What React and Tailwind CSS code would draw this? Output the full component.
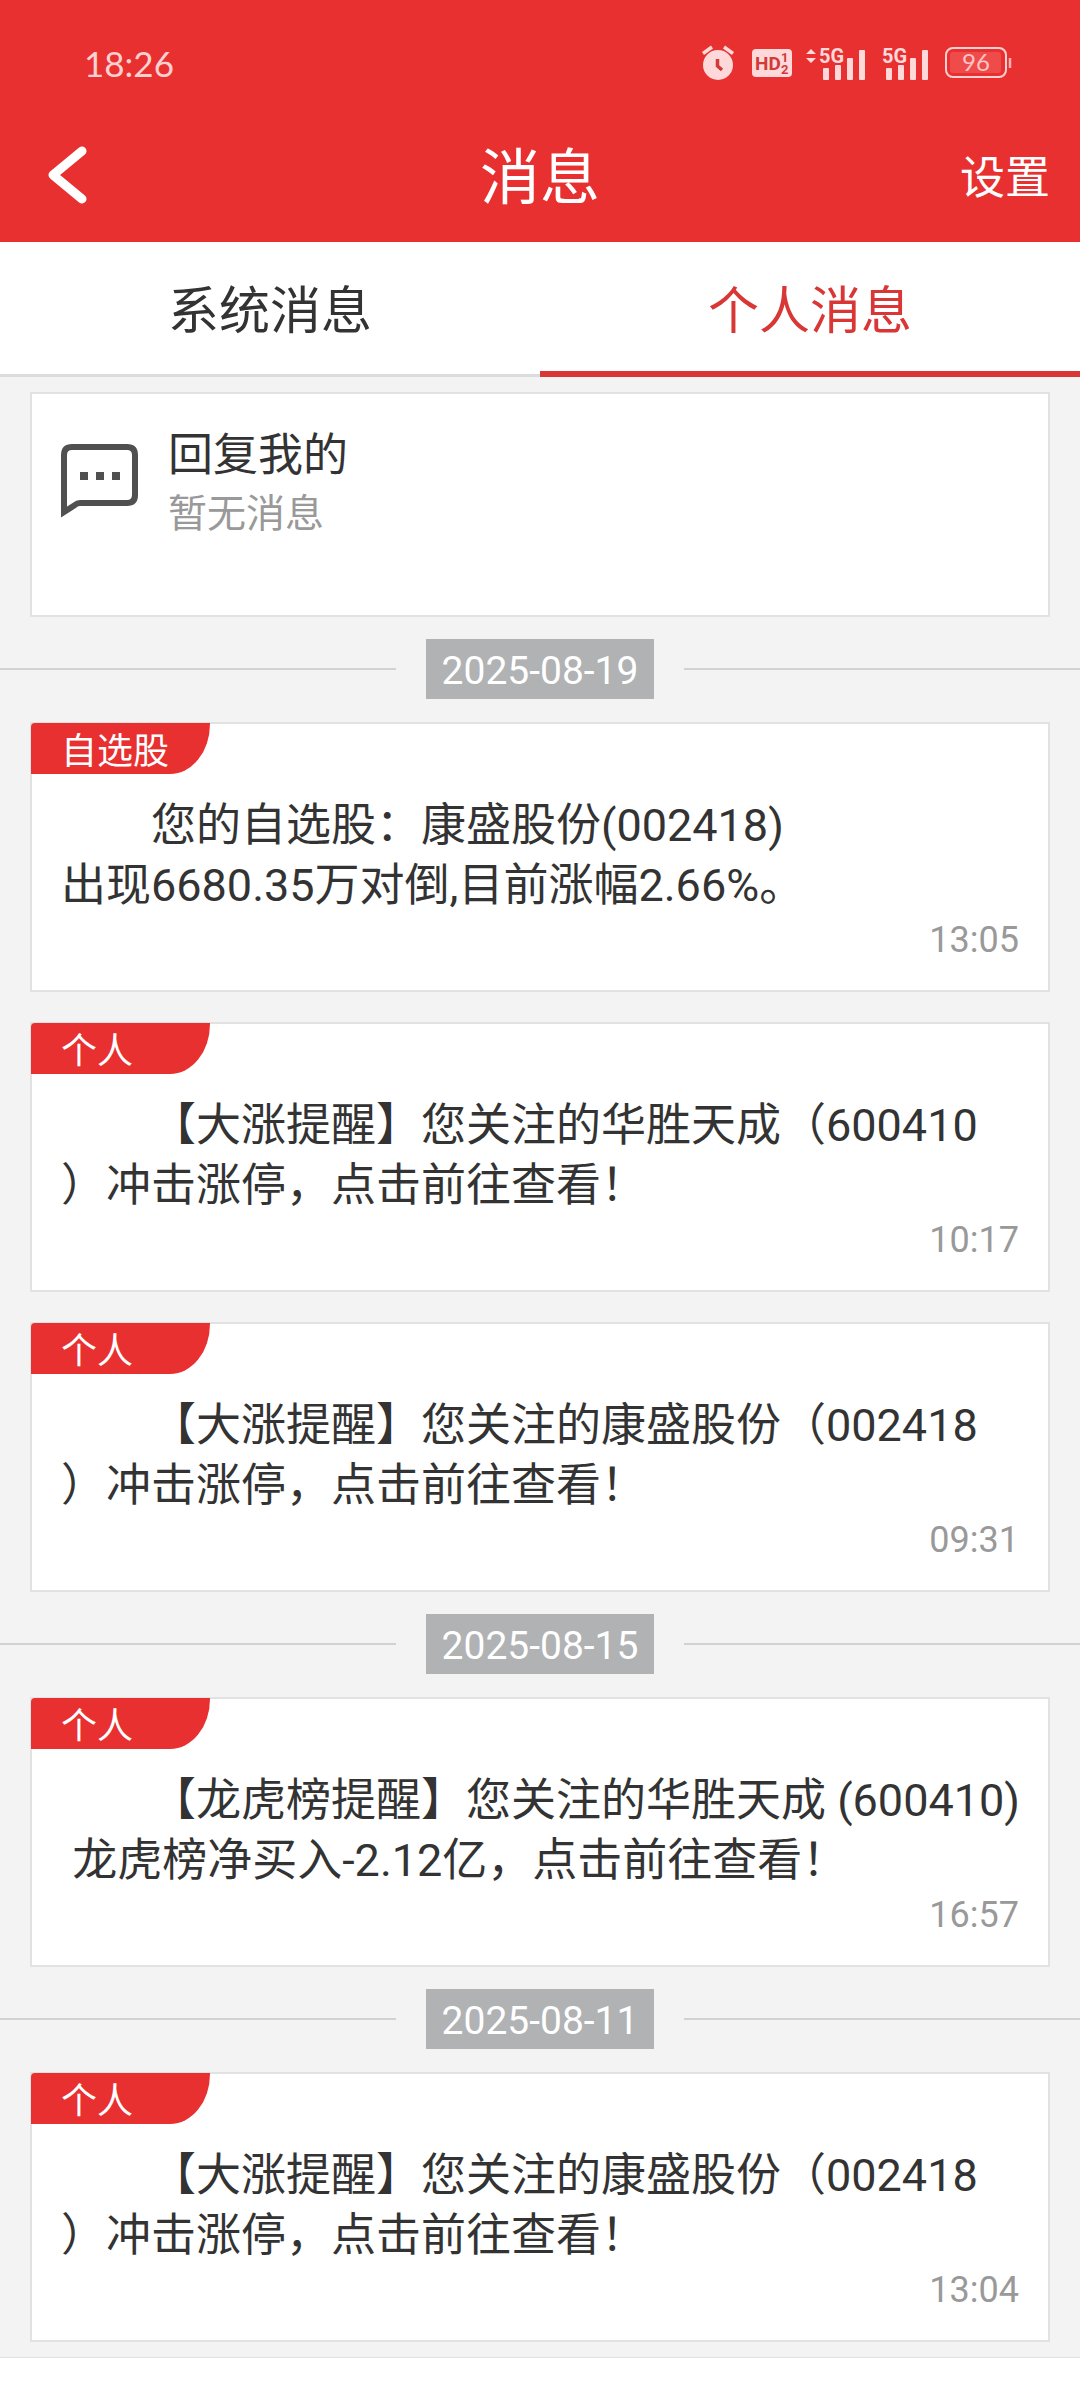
const messageGroups = [
  {
    date: '2025-08-19',
    messages: [
      { id: 1, tag: '自选股', time: '13:05', text: '　　您的自选股：康盛股份(002418)\n出现6680.35万对倒,目前涨幅2.66%。' },
      { id: 2, tag: '个人', time: '10:17', text: '　　【大涨提醒】您关注的华胜天成（600410\n）冲击涨停，点击前往查看！' },
      { id: 3, tag: '个人', time: '09:31', text: '　　【大涨提醒】您关注的康盛股份（002418\n）冲击涨停，点击前往查看！' },
    ],
  },
  {
    date: '2025-08-15',
    messages: [
      { id: 4, tag: '个人', time: '16:57', text: '　　【龙虎榜提醒】您关注的华胜天成 (600410)\n 龙虎榜净买入-2.12亿，点击前往查看！' },
    ],
  },
  {
    date: '2025-08-11',
    messages: [
      { id: 5, tag: '个人', time: '13:04', text: '　　【大涨提醒】您关注的康盛股份（002418\n）冲击涨停，点击前往查看！' },
    ],
  },
];

const tabs = [
  { key: 'system', label: '系统消息' },
  { key: 'personal', label: '个人消息' },
];

function AlarmIcon() {
  return (
    <svg width="32" height="36" viewBox="0 0 32 36" aria-hidden="true">
      <circle cx="16" cy="20" r="15" fill="#ffd9d9" />
      <path d="M1 8.500 10 2M31 8.500 22 2" stroke="#ffd9d9" strokeWidth="3.500" fill="none" />
      <path d="M15.500 14v7l4.500 4" stroke="#d13a3a" strokeWidth="3.500" fill="none" />
    </svg>
  );
}

function HdIcon() {
  return (
    <svg width="40" height="28" viewBox="0 0 40 28" aria-hidden="true" className="font-['Roboto',sans-serif] font-bold">
      <rect width="40" height="28" rx="4" fill="#ffd9d9" />
      <text x="3" y="21" fontSize="19" fill="#d13a3a">HD</text>
      <text x="29" y="13" fontSize="13" fill="#d13a3a">1</text>
      <text x="29" y="25" fontSize="13" fill="#d13a3a">2</text>
    </svg>
  );
}

function SignalIcon({ arrows }) {
  return (
    <svg width={arrows ? 60 : 47} height="36" viewBox={arrows ? '-13 0 60 36' : '0 0 47 36'} aria-hidden="true" className="font-['Roboto',sans-serif] font-bold" fill="#ffd9d9">
      {arrows && <path d="M-13 9l5-5 5 5zM-13 13h10l-5 5z" />}
      <text x="0" y="18" fontSize="20">5G</text>
      <rect x="4" y="23" width="6" height="12" rx="1" />
      <rect x="16" y="20" width="6" height="15" rx="1" />
      <rect x="28" y="13" width="6" height="22" rx="1" />
      <rect x="40" y="5" width="6" height="30" rx="1" />
    </svg>
  );
}

function BatteryIcon() {
  return (
    <svg width="67" height="32" viewBox="0 0 67 32" aria-hidden="true" className="font-['Lato',sans-serif]">
      <rect x="1" y="1" width="60" height="29" rx="7" fill="none" stroke="#ffd0d0" strokeWidth="2" />
      <rect x="5" y="5" width="51" height="21" rx="3" fill="#ef4b4b" />
      <path d="M65 11v10" stroke="#ffb0b0" strokeWidth="2.500" />
      <text x="31" y="24" fontSize="24" textAnchor="middle" fill="#ffc4c4">96</text>
    </svg>
  );
}

function ReplyIcon() {
  return (
    <svg width="77" height="74" viewBox="0 0 77 74" aria-hidden="true" className="shrink-0">
      <path d="M3 68V11q0-8 8-8h55q8 0 8 8v40q0 8-8 8H19q-3 0-5 2z" fill="none" stroke="#505050" strokeWidth="6" />
      <path d="M19 28h8v8h-8zM35 28h8v8h-8zM51 28h8v8h-8z" fill="#505050" />
    </svg>
  );
}

function DateDivider({ date }) {
  return (
    <div className="flex items-center gap-[30px] pt-[22px] pb-[23px]">
      <span className="h-[2px] flex-1 bg-[#d2d2d2]" />
      <time className="bg-[#b1b2b4] px-4 pt-1 text-[39px] leading-[56px] text-white">{date}</time>
      <span className="h-[2px] flex-1 bg-[#d2d2d2]" />
    </div>
  );
}

function MessageCard({ message }) {
  return (
    <article className="mx-[30px] border-2 border-[#e2e2e2] bg-white pb-[26px]">
      <div className="-mt-px -ml-px h-[51px] w-[179px] rounded-tl-[4px] rounded-br-[40px_50px] bg-[#e83030] pt-1 pl-[30px] text-[36px] leading-[50px] text-white">
        {message.tag}
      </div>
      <p className="mt-[22px] pl-[29px] text-[45px] leading-[60px] whitespace-pre text-[#333] [text-spacing-trim:space-all]">{message.text}</p>
      <time className="block pr-[29px] text-right text-[36px] leading-[48px] text-[#999]">{message.time}</time>
    </article>
  );
}

export default function App() {
  const activeTab = 'personal';

  return (
    <div className="min-h-screen overflow-x-hidden bg-white font-['Roboto','Noto_Sans_CJK_SC',sans-serif]" lang="zh-CN">
      <header className="bg-[#e83030] text-white">
        <div className="flex h-[112px] items-center justify-between pt-[14px] pr-[68px] pb-0 pl-[84px]">
          <span className="font-['Lato',sans-serif] text-[35px] text-[#ffd0d0]">18:26</span>
          <div className="flex items-center">
            <AlarmIcon />
            <div className="ml-[18px] flex items-center gap-[14px]">
              <HdIcon />
              <SignalIcon arrows />
            </div>
            <div className="ml-4 flex items-center gap-4">
              <SignalIcon />
              <BatteryIcon />
            </div>
          </div>
        </div>
        <div className="grid h-[130px] grid-cols-3 items-center px-[30px]">
          <button type="button" aria-label="返回" className="justify-self-start pl-4">
            <svg width="42" height="62" viewBox="0 0 42 62" fill="none" stroke="currentColor" strokeWidth="9" strokeLinecap="round" strokeLinejoin="round">
              <path d="M36 5 7 29l29 24" />
            </svg>
          </button>
          <h1 className="pt-1 text-center text-[60px] leading-[80px]">消息</h1>
          <button type="button" className="justify-self-end pt-1 text-[45px] leading-[60px]">设置</button>
        </div>
      </header>

      <nav className="grid h-[135px] grid-cols-2 bg-white" role="tablist">
        {tabs.map((tab) => (
          <button
            key={tab.key}
            type="button"
            role="tab"
            aria-selected={tab.key === activeTab}
            className={
              tab.key === activeTab
                ? 'border-b-6 border-[#d93636] pt-3 text-[51px] text-[#d93636]'
                : 'border-b-3 border-[#dcdcdc] pt-[9px] text-[51px] text-[#333]'
            }
          >
            {tab.label}
          </button>
        ))}
      </nav>

      <main className="border-b border-[#e2e2e2] bg-[#f3f3f3] pt-[15px] pb-[15px]">
        <section className="mx-[30px] flex min-h-[225px] items-start gap-[30px] border-2 border-[#e2e2e2] bg-white px-[29px] pt-8">
          <div className="pt-[18px]">
            <ReplyIcon />
          </div>
          <div>
            <h2 className="text-[45px] leading-[60px] text-[#333]">回复我的</h2>
            <p className="text-[39px] leading-[56px] text-[#999]">暂无消息</p>
          </div>
        </section>

        {messageGroups.map((group) => (
          <section key={group.date}>
            <DateDivider date={group.date} />
            <div className="flex flex-col gap-[30px]">
              {group.messages.map((message) => (
                <MessageCard key={message.id} message={message} />
              ))}
            </div>
          </section>
        ))}
      </main>
    </div>
  );
}
